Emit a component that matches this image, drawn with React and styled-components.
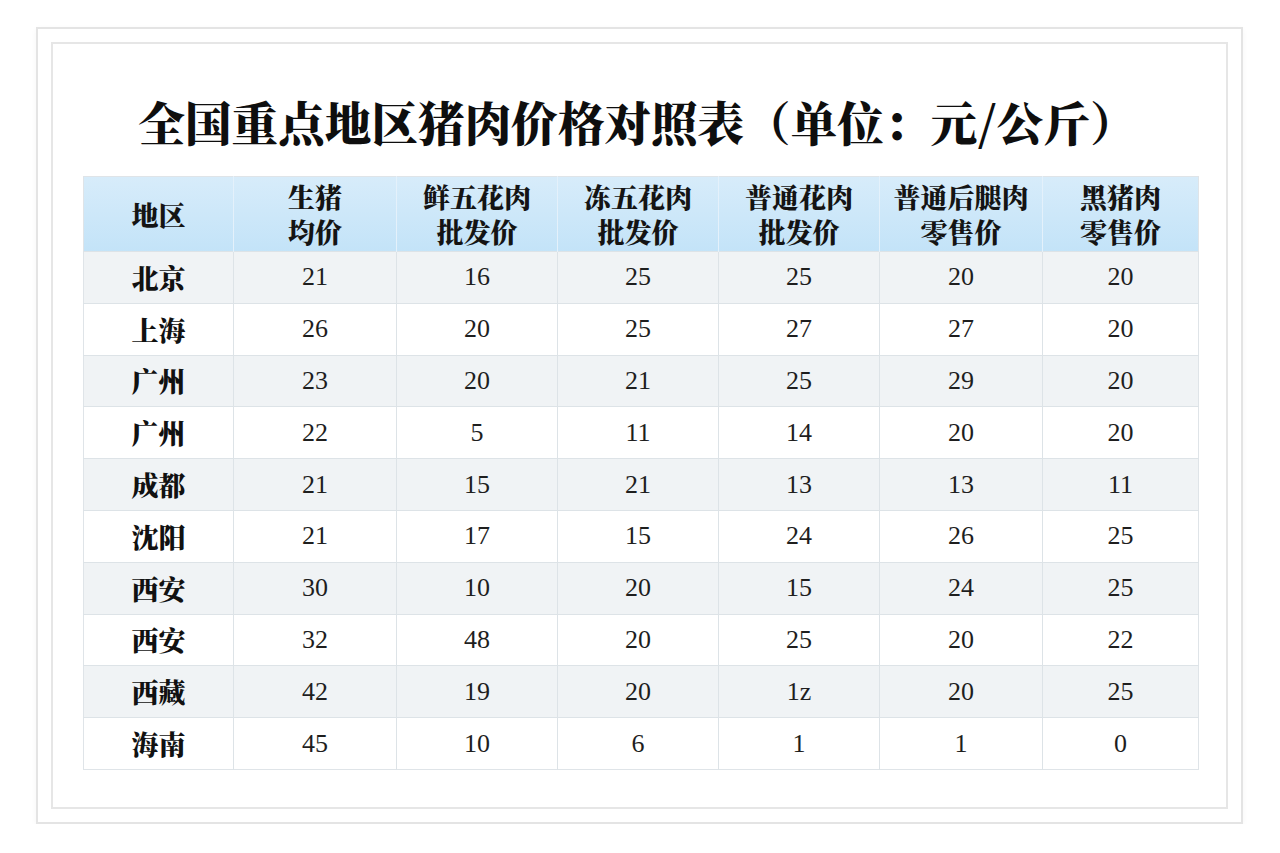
import React from "react";
import styled, { createGlobalStyle } from "styled-components";

const Global = createGlobalStyle`
  html, body { margin: 0; padding: 0; background: #ffffff; }
  body { font-family: "Noto Serif CJK SC", "Noto Sans CJK SC", serif; }
`;

const Outer = styled.div`
  box-sizing: border-box;
  width: 1207px;
  height: 797px;
  margin: 27px 0 0 36px;
  border: 2px solid #e4e4e4;
  padding: 13px;
  box-shadow: 0 2px 6px rgba(0, 0, 0, 0.04);
`;

const Inner = styled.div`
  box-sizing: border-box;
  height: 100%;
  border: 2px solid #e6e6e6;
  display: flex;
  flex-direction: column;
  align-items: center;
  padding-top: 48px;
`;

const Title = styled.h1`
  margin: 0 0 0 -4px;
  font-family: "Noto Serif CJK SC", "Noto Sans CJK SC", serif;
  font-weight: 900;
  font-size: 46.6px;
  line-height: 58px;
  color: #0e0e0e;
`;

const Table = styled.table`
  align-self: flex-start;
  margin: 26px 0 0 30px;
  width: 1115px;
  border-collapse: collapse;
  table-layout: fixed;
  border: 1px solid #dfe4e8;
`;

const HeadRow = styled.tr`
  background: linear-gradient(180deg, #d7ecfa 0%, #c3e3f8 100%);
  height: 75px;
`;

const HeadCell = styled.th`
  padding: 0;
  font-family: "Noto Serif CJK SC", "Noto Sans CJK SC", serif;
  font-weight: 900;
  font-size: 27px;
  line-height: 35px;
  color: #141414;
  text-align: center;
  vertical-align: middle;
  border-left: 1px solid #e4f1fb;
  &:first-child { border-left: none; }
`;

const HeadLine = styled.div`
  height: 35px;
`;

const Row = styled.tr`
  height: 51.8px;
  background: ${(p) => (p.$alt ? "#f0f3f5" : "#ffffff")};
`;

const NameCell = styled.td`
  padding: 0;
  font-family: "Noto Serif CJK SC", "Noto Sans CJK SC", serif;
  font-weight: 900;
  font-size: 27px;
  color: #111;
  text-align: center;
  border-top: 1px solid #dde3e7;
`;

const NumCell = styled.td`
  padding: 0;
  font-family: "Liberation Serif", "Times New Roman", serif;
  font-size: 26px;
  color: #1e1e1e;
  text-align: center;
  border-top: 1px solid #dde3e7;
  border-left: 1px solid #dde3e7;
`;

const widths = [150, 163, 161, 161, 161, 163, 156];

const headers = [
  ["地区"],
  ["生猪", "均价"],
  ["鲜五花肉", "批发价"],
  ["冻五花肉", "批发价"],
  ["普通花肉", "批发价"],
  ["普通后腿肉", "零售价"],
  ["黑猪肉", "零售价"],
];

const rows = [
  ["北京", "21", "16", "25", "25", "20", "20"],
  ["上海", "26", "20", "25", "27", "27", "20"],
  ["广州", "23", "20", "21", "25", "29", "20"],
  ["广州", "22", "5", "11", "14", "20", "20"],
  ["成都", "21", "15", "21", "13", "13", "11"],
  ["沈阳", "21", "17", "15", "24", "26", "25"],
  ["西安", "30", "10", "20", "15", "24", "25"],
  ["西安", "32", "48", "20", "25", "20", "22"],
  ["西藏", "42", "19", "20", "1z", "20", "25"],
  ["海南", "45", "10", "6", "1", "1", "0"],
];

export default function App() {
  return (
    <>
      <Global />
      <Outer>
        <Inner>
          <Title>全国重点地区猪肉价格对照表（单位：元/公斤）</Title>
          <Table>
            <colgroup>
              {widths.map((w, i) => (
                <col key={i} style={{ width: w }} />
              ))}
            </colgroup>
            <thead>
              <HeadRow>
                {headers.map((h, i) => (
                  <HeadCell key={i}>
                    {h.map((line, j) => (
                      <HeadLine key={j}>{line}</HeadLine>
                    ))}
                  </HeadCell>
                ))}
              </HeadRow>
            </thead>
            <tbody>
              {rows.map((r, i) => (
                <Row key={i} $alt={i % 2 === 0}>
                  <NameCell>{r[0]}</NameCell>
                  {r.slice(1).map((v, j) => (
                    <NumCell key={j}>{v}</NumCell>
                  ))}
                </Row>
              ))}
            </tbody>
          </Table>
        </Inner>
      </Outer>
    </>
  );
}
